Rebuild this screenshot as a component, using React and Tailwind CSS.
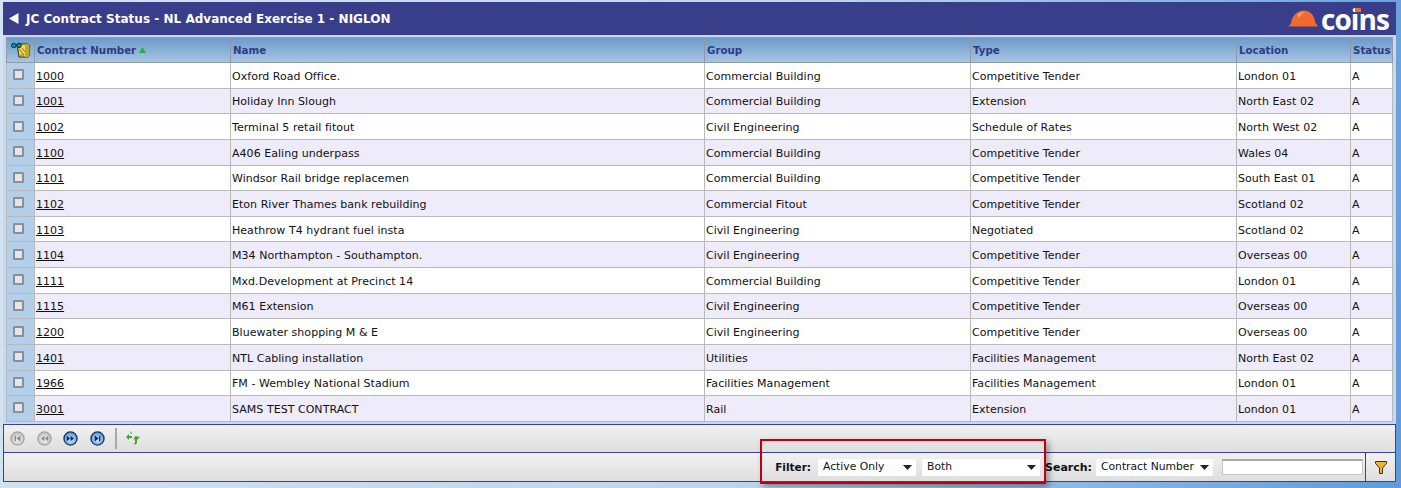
import React from "react";

const rows = [
  ["1000", "Oxford Road Office.", "Commercial Building", "Competitive Tender", "London 01"],
  ["1001", "Holiday Inn Slough", "Commercial Building", "Extension", "North East 02"],
  ["1002", "Terminal 5 retail fitout", "Civil Engineering", "Schedule of Rates", "North West 02"],
  ["1100", "A406 Ealing underpass", "Commercial Building", "Competitive Tender", "Wales 04"],
  ["1101", "Windsor Rail bridge replacemen", "Commercial Building", "Competitive Tender", "South East 01"],
  ["1102", "Eton River Thames bank rebuilding", "Commercial Fitout", "Competitive Tender", "Scotland 02"],
  ["1103", "Heathrow T4 hydrant fuel insta", "Civil Engineering", "Negotiated", "Scotland 02"],
  ["1104", "M34 Northampton - Southampton.", "Civil Engineering", "Competitive Tender", "Overseas 00"],
  ["1111", "Mxd.Development at Precinct 14", "Commercial Building", "Competitive Tender", "London 01"],
  ["1115", "M61 Extension", "Civil Engineering", "Competitive Tender", "Overseas 00"],
  ["1200", "Bluewater shopping M & E", "Civil Engineering", "Competitive Tender", "Overseas 00"],
  ["1401", "NTL Cabling installation", "Utilities", "Facilities Management", "North East 02"],
  ["1966", "FM - Wembley National Stadium", "Facilities Management", "Facilities Management", "London 01"],
  ["3001", "SAMS TEST CONTRACT", "Rail", "Extension", "London 01"],
];

const headCell = "border border-[#8f9aa6] px-[2px] text-left align-middle text-[10.25px] font-bold text-[#2f3a85]";
const cell = "border border-[#b9b9b9] px-[1px] pt-[2px] align-middle whitespace-nowrap overflow-hidden tracking-[0.04px]";

function NavButton({ active, dir, bar }) {
  const fill = active ? "#0b2a66" : "#8d8d8d";
  const ring = active ? "#16305f" : "#a3a3a3";
  const id = active ? "navOn" : "navOff";
  return (
    <svg width="15" height="15" viewBox="0 0 16 16">
      <defs>
        <radialGradient id={id} cx="50%" cy="60%" r="60%">
          <stop offset="0%" stopColor={active ? "#d7ecff" : "#f2f2f2"} />
          <stop offset="100%" stopColor={active ? "#4d8fd8" : "#bdbdbd"} />
        </radialGradient>
      </defs>
      <circle cx="8" cy="8" r="7" fill={`url(#${id})`} stroke={ring} strokeWidth="1.4" />
      {dir === "left" ? (
        bar ? (
          <path d="M5 5h1.4v6H5zM11 4.8v6.4L6.8 8z" fill={fill} />
        ) : (
          <path d="M8 5v6L4.4 8zM12 5v6L8.4 8z" fill={fill} />
        )
      ) : bar ? (
        <path d="M9.6 5H11v6H9.6zM5 4.8v6.4L9.2 8z" fill={fill} />
      ) : (
        <path d="M4 5v6l3.6-3zM8 5v6l3.6-3z" fill={fill} />
      )}
    </svg>
  );
}

function ChooserIcon() {
  return (
    <svg width="20" height="16" viewBox="0 0 20 16">
      <path d="M6 2h11l1 1v11l-1 1H8z" fill="#f1dc55" stroke="#2f2a10" strokeWidth="1" />
      <path d="M14 2h3l1 1v11l-1 1h-3z" fill="#c9a92a" />
      <path d="M8 7l5 6M11 6l3 4M9 13h4" stroke="#8a7420" strokeWidth="1" />
      <circle cx="2.8" cy="3.5" r="2.3" fill="#1d8a92" stroke="#0d3136" />
      <circle cx="8" cy="3.5" r="2.3" fill="#1d8a92" stroke="#0d3136" />
      <path d="M4.8 3h1.4" stroke="#0d3136" strokeWidth="1.5" />
    </svg>
  );
}

function Select({ value, width }) {
  return (
    <div className={`flex h-[17px] items-center justify-between rounded-[2px] bg-white pl-[5px] pr-[4px] text-[10.75px] ${width}`}>
      <span>{value}</span>
      <svg width="9" height="5" viewBox="0 0 9 5">
        <path d="M0 0h9L4.5 5z" fill="#222" />
      </svg>
    </div>
  );
}

export default function App() {
  return (
    <div
      className="relative h-[488px] w-[1401px] overflow-hidden bg-[linear-gradient(100deg,#d3e3f3_0%,#bcd5ee_55%,#5f9bdc_100%)] pl-[3px] pt-[2px] text-[11px] leading-none text-[#111]"
      style={{ fontFamily: '"DejaVu Sans", Verdana, sans-serif' }}
    >
      <div className="flex w-[1393px] flex-col">
        {/* title bar */}
        <div className="flex h-[33px] items-center justify-between bg-[#393e8a] pl-[6px] pr-[7px]">
          <div className="flex items-center gap-[7px]">
            <svg width="10" height="11" viewBox="0 0 10 11">
              <path d="M9.5 0v11L0 5.5z" fill="#fff" />
            </svg>
            <span className="text-[12px] font-bold tracking-[0.02px] text-white">JC Contract Status - NL Advanced Exercise 1 - NIGLON</span>
          </div>
          <div className="flex items-center gap-[3px]">
            <svg width="30" height="17" viewBox="0 0 30 17">
              <path d="M0 16.5l3-3C4 6 9 0.5 16 0.5c6 0 10 4 11 11.5l3 4.5z" fill="#f26b2d" />
              <path d="M9 5c2-2 5-3 8-3-2 1-5 3-6 6z" fill="#f9a06f" />
            </svg>
            <span
              className="relative text-[28px] font-bold leading-[26px] tracking-[-0.9px] text-white"
              style={{ fontFamily: '"Open Sans", sans-serif' }}
            >
              coins
              <span className="absolute left-[34px] top-[2px] h-[4px] w-[6px] bg-[#f26b2d]" />
            </span>
          </div>
        </div>

        {/* grid */}
        <div className="h-[389px] bg-[#c9d8ea] px-[3px] pt-[2px]">
          <table className="w-[1386px] table-fixed border-collapse">
            <colgroup>
              <col className="w-[28px]" />
              <col className="w-[196px]" />
              <col className="w-[474px]" />
              <col className="w-[266px]" />
              <col className="w-[266px]" />
              <col className="w-[114px]" />
              <col className="w-[42px]" />
            </colgroup>
            <thead>
              <tr className="h-[25px] bg-[linear-gradient(180deg,#6c9bcc_0%,#a9c6e4_100%)]">
                <th className={headCell}>
                  <span className="flex justify-center">
                    <ChooserIcon />
                  </span>
                </th>
                <th className={headCell}>
                  <span className="flex items-center gap-[3px]">
                    Contract Number
                    <svg width="7" height="6" viewBox="0 0 7 6">
                      <path d="M3.5 0L7 6H0z" fill="#2cae3a" />
                    </svg>
                  </span>
                </th>
                <th className={headCell}>Name</th>
                <th className={headCell}>Group</th>
                <th className={headCell}>Type</th>
                <th className={headCell}>Location</th>
                <th className={headCell}>Status</th>
              </tr>
            </thead>
            <tbody>
              {rows.map((r, i) => (
                <tr key={r[0]} className={`h-[25.64px] ${i % 2 ? "bg-[#eeebfa]" : "bg-white"}`}>
                  <td className="border border-[#b9b9b9] bg-[#b3cfe9] align-middle">
                    <span className="mb-[1px] ml-[6px] block h-[11px] w-[11px] rounded-[1px] border-2 border-[#8c8f94] bg-[#e4e6ea]" />
                  </td>
                  <td className={cell}>
                    <span className="underline">{r[0]}</span>
                  </td>
                  <td className={cell}>{r[1]}</td>
                  <td className={cell}>{r[2]}</td>
                  <td className={cell}>{r[3]}</td>
                  <td className={cell}>{r[4]}</td>
                  <td className={cell}>A</td>
                </tr>
              ))}
            </tbody>
          </table>
        </div>

        {/* pager */}
        <div className="flex h-[29px] items-center gap-[11.6px] border border-[#3a4390] bg-[linear-gradient(180deg,#f1f1f1_0%,#dedede_100%)] pb-[1px] pl-[6px]">
          <NavButton dir="left" bar />
          <NavButton dir="left" />
          <NavButton active dir="right" />
          <NavButton active dir="right" bar />
          <div className="-ml-[1px] h-[21px] w-[2px] bg-[#a8a8a8]" />
          <svg className="-ml-[3px]" width="14" height="14" viewBox="0 0 14 14">
            <path d="M0 6l3-3v2h3v2H3v2zM14 6l-3 3-0 3.5H9V8.5L7.5 8l2-3 1.5 .5z" fill="#3fa52e" />
            <path d="M4 0l2 2-1 1zM9 14l-1-2 2 0z" fill="#2e8a22" />
          </svg>
        </div>

        {/* filter bar */}
        <div className="flex h-[29px] items-center justify-end border-x border-b border-[#3a4390] bg-[linear-gradient(180deg,#f1f1f1_0%,#dedede_100%)]">
          <span className="mr-[7px] text-[10.5px] font-bold">Filter:</span>
          <Select value="Active Only" width="w-[98px]" />
          <span className="w-[6px]" />
          <Select value="Both" width="w-[118px]" />
          <span className="ml-[5px] mr-[4px] font-bold">Search:</span>
          <Select value="Contract Number" width="w-[117px]" />
          <div className="ml-[9px] mr-[2px] h-[16px] w-[141px] border border-t-2 border-[#c8c8c8] border-t-[#a9a9a9] bg-white" />
          <div className="flex h-full w-[30px] items-center justify-center border-l border-[#3a4390]">
            <svg width="12" height="13" viewBox="0 0 12 13">
              <path d="M0.5 0.5h11v2L7.5 7v5.5h-3V7L0.5 2.5z" fill="#f5b324" stroke="#333" strokeWidth="1" />
            </svg>
          </div>
        </div>
      </div>

      {/* red highlight over the filter controls */}
      <div className="absolute left-[760px] top-[439px] h-[45px] w-[286px] border-2 border-[#c0000c] shadow-[3px_3px_6px_rgba(0,0,0,0.35)]" />
    </div>
  );
}
